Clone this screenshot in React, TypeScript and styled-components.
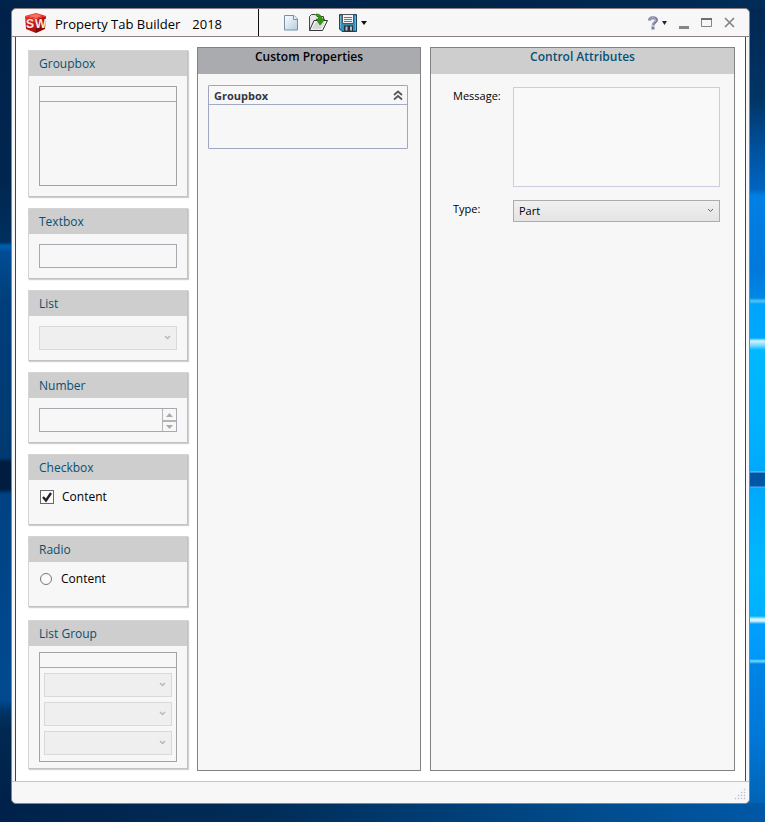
import React from "react";
import styled, { createGlobalStyle, css } from "styled-components";

const GlobalStyle = createGlobalStyle`
  *, *::before, *::after { box-sizing: border-box; }
  body {
    margin: 0;
    font-family: "Open Sans", "Noto Sans", sans-serif;
    font-size: 12px;
    line-height: 16px;
    color: #000;
  }
  button, input, select, textarea { font: inherit; color: inherit; margin: 0; }
`;

const Desktop = styled.div`
  display: flex;
  min-height: 100vh;
  padding: 8px 15px 18px 11px;
  background:
    linear-gradient(90deg, #00224a, #002d58 35%, #004a8a 75%, #0058a6) bottom / 100% 19px no-repeat,
    linear-gradient(90deg, #00234b, #002349 60%, #002d58) top / 100% 9px no-repeat,
    linear-gradient(180deg,
      #00224a 0, #00264f 180px, #003060 242px, #0060b4 246px, #004c94 252px,
      #003f7c 300px, #00396f 458px, #001c3e 462px, #001c3e 489px, #004283 494px,
      #004a90 700px, #003468 711px, #002850 730px, #00224a 804px) left / 50% 100% no-repeat,
    linear-gradient(180deg,
      #00264f 0, #003566 100px, #0052a0 150px, #0064c0 189px, #0080e6 196px,
      #0078dc 270px, #0088e6 298px, #58c4f4 301px, #00a4fc 304px, #00a8ff 338px,
      #d4f4ff 341px, #80dcff 345px, #00b8ff 350px, #00b0ff 440px, #00a8fc 471px,
      #70ccff 472px, #0054a4 473px, #0058a8 486px, #58b4f4 487px, #00a8fc 488px,
      #00b8ff 570px, #00b0ff 616px, #d4f4ff 619px, #d4f4ff 621px, #00a0ff 624px,
      #0098f8 659px, #70e0ff 661px, #0084e8 664px, #0078d8 735px, #005ead 822px) right / 50% 100% no-repeat;
`;

const Window = styled.div`
  flex: 1;
  display: flex;
  flex-direction: column;
  overflow: hidden;
  border: 1px solid #8c8082;
  border-radius: 5px;
  background: #f7f7f7;
`;

const TitleBar = styled.header`
  display: flex;
  height: 28px;
  border-bottom: 1px solid #8c8082;
`;

const Brand = styled.div`
  display: flex;
  align-items: center;
  gap: 8px;
  width: 247px;
  padding: 0 0 0 12px;
  border-right: 1px solid #111;
`;

const AppTitle = styled.h1`
  display: flex;
  gap: 12px;
  margin: 0;
  padding-top: 2px;
  font-size: 13px;
  line-height: 20px;
  font-weight: 400;
  white-space: nowrap;
`;

const Toolbar = styled.div`
  display: flex;
  align-items: center;
  gap: 10px;
  flex: 1;
  padding-left: 25px;
`;

const WindowControls = styled.div`
  display: flex;
  align-items: center;
  gap: 12px;
  padding-right: 14px;
`;

const IconButton = styled.button`
  display: flex;
  align-items: center;
  gap: 4px;
  padding: 0;
  border: 0;
  background: none;

  svg { display: block; }
`;

const Body = styled.main`
  flex: 1;
  display: grid;
  grid-template-columns: 160px 224fr 305fr;
  gap: 9px;
  margin: 0 3px;
  padding: 10px 10px 10px 12px;
  border: solid #3f4657;
  border-width: 0 1px;
  background: #fff;
`;

const Palette = styled.aside`
  display: flex;
  flex-direction: column;
  gap: 11px;
  padding-top: 1px;
`;

const Card = styled.section<{ $group?: boolean }>`
  display: flex;
  flex-direction: column;
  min-height: 71px;
  border: 1px solid #d4d4d4;
  border-right-color: #c2c2c2;
  border-bottom-color: #c2c2c2;
  background: #f7f7f7;
  box-shadow: 1px 1px 1px #d0d0d0;
  ${(p) => p.$group && css`margin-top: 2px;`}
`;

const CardTitle = styled.h2`
  margin: 0;
  padding: 5px 10px 4px;
  background: #cecece;
  color: #08506f;
  font-size: 12px;
  line-height: 16px;
  font-weight: 400;
`;

const CardBody = styled.div<{ $tight?: boolean }>`
  padding: ${(p) => (p.$tight ? 6 : 10)}px 10px;
`;

const GroupPreview = styled.div`
  display: flex;
  flex-direction: column;
  min-height: 100px;
  border: 1px solid #a3a3a6;

  &::before {
    content: "";
    height: 15px;
    border-bottom: 1px solid #a8a8aa;
  }
`;

const GroupRows = styled.div`
  display: flex;
  flex-direction: column;
  gap: 5px;
  padding: 5px 4px 6px;
`;

const TextInput = styled.input`
  display: block;
  width: 100%;
  height: 24px;
  padding: 0 6px;
  border: 1px solid #a8a8b0;
  border-radius: 0;
  background: #f7f7f7;
`;

const SelectBox = styled.div`
  display: grid;
  align-items: center;

  > * { grid-area: 1 / 1; }
  > svg { justify-self: end; margin: 0 6px 2px 0; pointer-events: none; }
`;

const Select = styled.select<{ $active?: boolean }>`
  appearance: none;
  width: 100%;
  height: ${(p) => (p.$active ? 22 : 24)}px;
  padding: 0 5px;
  border: 1px solid ${(p) => (p.$active ? "#acacac" : "#d9d9d9")};
  border-radius: 0;
  background: ${(p) => (p.$active ? "linear-gradient(#f0f0f0, #e4e4e4)" : "#efefef")};
  font-size: 11px;
  opacity: 1;
`;

const NumberBox = styled.div`
  display: flex;
  height: 24px;
  border: 1px solid #a8a8b0;
`;

const NumberInput = styled.input`
  flex: 1;
  min-width: 0;
  padding: 0 6px;
  border: 0;
  background: transparent;
  appearance: textfield;
`;

const Spinner = styled.div`
  display: grid;
  grid-template-rows: 1fr 1fr;
  width: 14px;
`;

const SpinButton = styled.button`
  display: grid;
  place-items: center;
  padding: 0;
  border: solid #b4b4b4;
  border-width: 0 0 0 1px;
  background: #f7f7f7;

  & + & { border-top-width: 2px; }
`;

const Choice = styled.label<{ $gap: number }>`
  display: flex;
  align-items: center;
  gap: ${(p) => p.$gap}px;
  padding-left: 1px;
  line-height: 14px;
`;

const Tick = styled.input`
  appearance: none;
  width: 14px;
  height: 14px;
  border: 1px solid #686868;
  background: #fafafa;

  &:checked {
    background: #fafafa
      url("data:image/svg+xml,%3Csvg xmlns='http://www.w3.org/2000/svg' viewBox='0 0 12 12'%3E%3Cpath d='M2 6l3 3.5L10 2' fill='none' stroke='%23222' stroke-width='2.3'/%3E%3C/svg%3E")
      center / 12px 12px no-repeat;
  }
`;

const Dot = styled.input`
  appearance: none;
  width: 12px;
  height: 12px;
  border: 1px solid #777;
  border-radius: 50%;
  background: #fafafa;

  &:checked { box-shadow: inset 0 0 0 2px #fafafa; background: #333; }
`;

const Panel = styled.section`
  display: flex;
  flex-direction: column;
  min-width: 0;
  border: 1px solid #828284;
  background: #f7f7f7;
`;

const PanelTitle = styled.h2<{ $dark?: boolean }>`
  margin: 0;
  padding: 1px 4px 9px;
  background: ${(p) => (p.$dark ? "#aaabaf" : "#cecece")};
  color: ${(p) => (p.$dark ? "#000" : "#075275")};
  font-size: 12px;
  line-height: 16px;
  font-weight: 600;
  text-align: center;
`;

const DropArea = styled.div`
  padding: 11px 12px 11px 10px;
`;

const PropertyGroup = styled.section`
  height: 64px;
  border: 1px solid #9ea6c0;
  border-radius: 1px;
`;

const PropertyHeading = styled.div`
  display: flex;
  align-items: center;
  justify-content: space-between;
  height: 19px;
  padding: 0 4px 0 5px;
  border-bottom: 1px solid #a2aac4;
`;

const PropertyName = styled.h3`
  margin: 0;
  padding-top: 2px;
  color: #343844;
  font-size: 11px;
  line-height: 16px;
  font-weight: 700;
`;

const Form = styled.form`
  display: grid;
  grid-template-columns: 60px 1fr;
  row-gap: 13px;
  padding: 13px 14px 13px 22px;
`;

const Label = styled.label`
  font-size: 11px;
  line-height: 16px;
  padding-top: 1px;
`;

const Message = styled.textarea`
  display: block;
  width: 100%;
  height: 100px;
  padding: 4px 6px;
  border: 1px solid #cacddc;
  border-radius: 0;
  background: #f9f9f9;
  resize: none;
`;

const StatusBar = styled.footer`
  display: flex;
  align-items: flex-end;
  justify-content: flex-end;
  height: 22px;
  padding: 0 3px 3px;
  border-top: 1px solid #c4c4c6;
`;

const Logo = () => (
  <svg width="23" height="22" viewBox="0 0 23 22" aria-hidden="true">
    <defs>
      <linearGradient id="cubeLeft" x1="0" y1="0" x2="0" y2="1">
        <stop offset="0" stopColor="#ee2a1c" />
        <stop offset="1" stopColor="#a80c08" />
      </linearGradient>
      <linearGradient id="cubeRight" x1="0" y1="0" x2="0" y2="1">
        <stop offset="0" stopColor="#c41010" />
        <stop offset="1" stopColor="#780404" />
      </linearGradient>
    </defs>
    <path d="M1 4L12 1l10 3-10 3z" fill="#ee2418" />
    <path d="M4 4l8-2.500L18 4l-6 2z" fill="#f9a498" opacity=".6" />
    <path d="M1 4l11 3v14L2 17z" fill="url(#cubeLeft)" />
    <path d="M12 7l10-3-1 13-9 4z" fill="url(#cubeRight)" />
    <text x="2" y="16" fontFamily="Liberation Sans, sans-serif" fontWeight="700" fontSize="12" fill="#f6e8e4">S</text>
    <text x="11" y="16" fontFamily="Liberation Sans, sans-serif" fontWeight="700" fontSize="12" fill="#f6e8e4">W</text>
  </svg>
);

const NewIcon = () => (
  <svg width="14" height="17" viewBox="0 0 14 17" aria-hidden="true">
    <defs>
      <linearGradient id="sheet" x1="0" y1="0" x2="1" y2="1">
        <stop offset="0" stopColor="#fff" />
        <stop offset="1" stopColor="#b4cce0" />
      </linearGradient>
    </defs>
    <path d="M.5 1.500H10l3.500 3.500v11H.5z" fill="url(#sheet)" stroke="#7890a4" />
    <path d="M9.500 1.500V5.500H13.500" fill="#e8f0f8" stroke="#7890a4" />
  </svg>
);

const OpenIcon = () => (
  <svg width="21" height="19" viewBox="0 0 21 19" aria-hidden="true">
    <path d="M1.500 17.500V3.500l2-2h4l1.500 2h6.500v4" fill="#e8e8e8" stroke="#444" />
    <path d="M1.500 17.500L6 7.500h13.500l-5 10z" fill="#f2f2f2" stroke="#333" />
    <path d="M4 16l3.500-7H17l-4 7z" fill="#d8d8d8" />
    <path d="M8 1c4 0 6 2 6 5h3l-5 6-4-6h2.500c0-2-.5-3-2.500-5z" fill="#2f9a08" stroke="#187000" strokeWidth=".6" />
  </svg>
);

const SaveIcon = () => (
  <svg width="18" height="18" viewBox="0 0 18 18" aria-hidden="true">
    <path d="M.5.5h17v17H3l-2.500-2.500z" fill="#348db8" stroke="#174860" />
    <path d="M3.500.5h11v9h-11z" fill="#f3f3f3" stroke="#555" />
    <path d="M5 3.500h8M5 5.500h8M5 7.500h8" stroke="#777" />
    <path d="M5 11.500h9v6H5z" fill="#28343c" />
    <path d="M6.500 12.500h2v4h-2zM11 12.500h2v4h-2z" fill="#b4c3c8" />
    <path d="M1.500 2v12M16.500 2v14" stroke="#68b6d8" />
  </svg>
);

const Caret = ({ size = 6, up = false, color = "#111" }: { size?: number; up?: boolean; color?: string }) => (
  <svg width={size} height="4" viewBox="0 0 6 4" preserveAspectRatio="none" aria-hidden="true">
    <path d={up ? "M0 4l3-4 3 4z" : "M0 0h6L3 4z"} fill={color} />
  </svg>
);

const Chevron = ({ color = "#b8b8b8", weight = 1.5 }: { color?: string; weight?: number }) => (
  <svg width="7" height="7" viewBox="0 0 7 7" aria-hidden="true">
    <path d="M1 2l2.500 2.500L6 2" fill="none" stroke={color} strokeWidth={weight} />
  </svg>
);

const HelpIcon = () => (
  <svg width="10" height="14" viewBox="0 0 10 14" aria-hidden="true">
    <path d="M1.500 4.500C1.500 1 8.500 1 8.500 4c0 2.500-3.500 2.300-3.500 5.500" fill="none" stroke="#7a80a0" strokeWidth="3" />
    <path d="M1.500 3.500C2.500 1 7.500 1 7.500 4c0 2-3 2.500-3 5" fill="none" stroke="#b4bad2" />
    <path d="M3.500 10.500h3v3h-3z" fill="#7a80a0" />
  </svg>
);

const MinimizeIcon = () => (
  <svg width="10" height="14" viewBox="0 0 10 14" aria-hidden="true">
    <path d="M0 10h10v3H0z" fill="#858585" />
  </svg>
);

const MaximizeIcon = () => (
  <svg width="11" height="9" viewBox="0 0 11 9" aria-hidden="true">
    <path d="M.5.5h10v8H.5z" fill="none" stroke="#858585" />
    <path d="M0 1h11" stroke="#707070" strokeWidth="2" />
  </svg>
);

const CloseIcon = () => (
  <svg width="11" height="11" viewBox="0 0 11 11" aria-hidden="true">
    <path d="M1 1l9 9M10 1l-9 9" stroke="#858585" strokeWidth="1.700" />
  </svg>
);

const CollapseIcon = () => (
  <svg width="10" height="11" viewBox="0 0 10 11" aria-hidden="true">
    <path d="M1 5l4-3.500L9 5M1 9.500L5 6l4 3.500" fill="none" stroke="#555" strokeWidth="1.700" />
  </svg>
);

const ResizeGrip = () => (
  <svg width="12" height="12" viewBox="0 0 12 12" aria-hidden="true">
    <path
      d="M10 1h1v1h-1zM10 4h1v1h-1zM7 4h1v1H7zM10 7h1v1h-1zM7 7h1v1H7zM4 7h1v1H4zM10 10h1v1h-1zM7 10h1v1H7zM4 10h1v1H4zM1 10h1v1H1z"
      fill="#a6aec6"
      stroke="#c0c6d8"
      strokeWidth=".5"
    />
  </svg>
);

const DisabledList = ({ name }: { name: string }) => (
  <SelectBox>
    <Select disabled aria-label={name} />
    <Chevron />
  </SelectBox>
);

export default function App() {
  return (
    <>
      <GlobalStyle />
      <Desktop>
        <Window>
          <TitleBar>
            <Brand>
              <Logo />
              <AppTitle>
                <span>Property Tab Builder</span>
                <span>2018</span>
              </AppTitle>
            </Brand>
            <Toolbar>
              <IconButton aria-label="New"><NewIcon /></IconButton>
              <IconButton aria-label="Open"><OpenIcon /></IconButton>
              <IconButton aria-label="Save"><SaveIcon /><Caret /></IconButton>
            </Toolbar>
            <WindowControls>
              <IconButton aria-label="Help"><HelpIcon /><Caret size={5} color="#223" /></IconButton>
              <IconButton aria-label="Minimize"><MinimizeIcon /></IconButton>
              <IconButton aria-label="Maximize"><MaximizeIcon /></IconButton>
              <IconButton aria-label="Close"><CloseIcon /></IconButton>
            </WindowControls>
          </TitleBar>

          <Body>
            <Palette>
              <Card $group>
                <CardTitle>Groupbox</CardTitle>
                <CardBody><GroupPreview /></CardBody>
              </Card>
              <Card>
                <CardTitle>Textbox</CardTitle>
                <CardBody><TextInput type="text" aria-label="Textbox" /></CardBody>
              </Card>
              <Card>
                <CardTitle>List</CardTitle>
                <CardBody><DisabledList name="List" /></CardBody>
              </Card>
              <Card>
                <CardTitle>Number</CardTitle>
                <CardBody>
                  <NumberBox>
                    <NumberInput type="text" inputMode="numeric" aria-label="Number" />
                    <Spinner>
                      <SpinButton aria-label="Increase"><Caret size={7} up color="#aaa" /></SpinButton>
                      <SpinButton aria-label="Decrease"><Caret size={7} color="#aaa" /></SpinButton>
                    </Spinner>
                  </NumberBox>
                </CardBody>
              </Card>
              <Card>
                <CardTitle>Checkbox</CardTitle>
                <CardBody>
                  <Choice $gap={8}><Tick type="checkbox" defaultChecked />Content</Choice>
                </CardBody>
              </Card>
              <Card>
                <CardTitle>Radio</CardTitle>
                <CardBody>
                  <Choice $gap={9}><Dot type="radio" name="sample" />Content</Choice>
                </CardBody>
              </Card>
              <Card $group>
                <CardTitle>List Group</CardTitle>
                <CardBody $tight>
                  <GroupPreview>
                    <GroupRows>
                      <DisabledList name="First list" />
                      <DisabledList name="Second list" />
                      <DisabledList name="Third list" />
                    </GroupRows>
                  </GroupPreview>
                </CardBody>
              </Card>
            </Palette>

            <Panel>
              <PanelTitle $dark>Custom Properties</PanelTitle>
              <DropArea>
                <PropertyGroup>
                  <PropertyHeading>
                    <PropertyName>Groupbox</PropertyName>
                    <IconButton aria-label="Collapse"><CollapseIcon /></IconButton>
                  </PropertyHeading>
                </PropertyGroup>
              </DropArea>
            </Panel>

            <Panel>
              <PanelTitle>Control Attributes</PanelTitle>
              <Form onSubmit={(e) => e.preventDefault()}>
                <Label htmlFor="message">Message:</Label>
                <Message id="message" />
                <Label htmlFor="type">Type:</Label>
                <SelectBox>
                  <Select id="type" $active defaultValue="Part">
                    <option>Part</option>
                    <option>Assembly</option>
                    <option>Drawing</option>
                    <option>Weldment</option>
                  </Select>
                  <Chevron color="#606060" weight={1} />
                </SelectBox>
              </Form>
            </Panel>
          </Body>

          <StatusBar><ResizeGrip /></StatusBar>
        </Window>
      </Desktop>
    </>
  );
}
